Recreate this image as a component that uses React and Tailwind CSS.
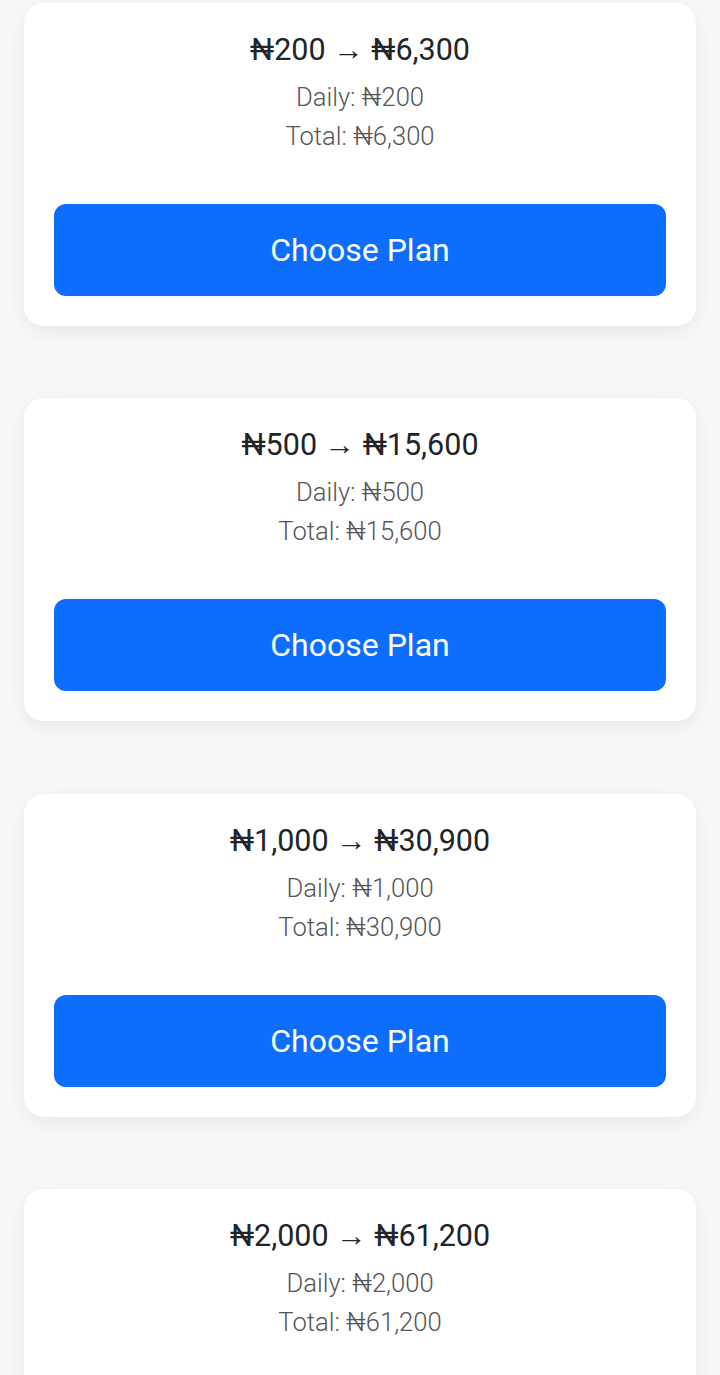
import React from "react";

const plans = [
  { from: "₦200", to: "₦6,300" },
  { from: "₦500", to: "₦15,600" },
  { from: "₦1,000", to: "₦30,900" },
  { from: "₦2,000", to: "₦61,200" },
];

function Card({ from, to }) {
  return (
    <div className="bg-white rounded-[20px] shadow-[0_6px_22px_rgba(0,0,0,0.07)] px-[30px] pt-[29px] pb-[30px] flex flex-col items-center">
      <div className="text-[30.5px] leading-[36px] font-normal text-[#212529]">
        {from} → {to}
      </div>
      <div className="mt-[10px] text-[25.6px] leading-[39px] font-light text-[#555]">
        Daily: {from}
      </div>
      <div className="text-[25.6px] leading-[39px] font-light text-[#555]">
        Total: {to}
      </div>
      <button className="mt-[48px] w-full h-[92px] rounded-[12px] bg-[#0d6efd] text-white text-[32px] font-normal">
        Choose Plan
      </button>
    </div>
  );
}

export default function App() {
  return (
    <div
      className="h-[1375px] overflow-hidden bg-[#f7f8fa] px-[24px] pt-[3px] flex flex-col gap-[72.3px]"
      style={{ fontFamily: "Roboto, 'Noto Sans', sans-serif" }}
    >
      {plans.map((p) => (
        <Card key={p.from} {...p} />
      ))}
    </div>
  );
}
